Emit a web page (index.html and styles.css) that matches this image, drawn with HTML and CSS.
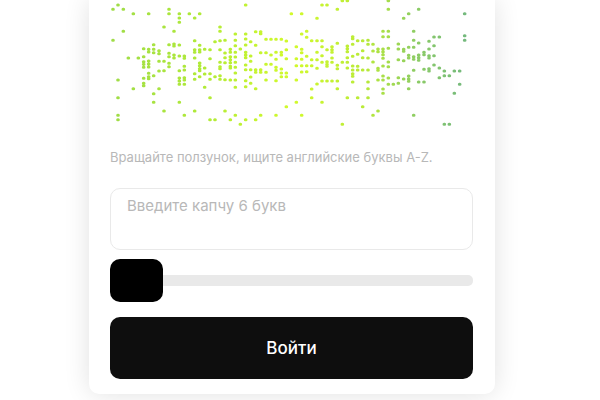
FILE: index.html
```
<!DOCTYPE html>
<html lang="ru">
<head>
  <meta charset="UTF-8">
  <meta name="viewport" content="width=device-width, initial-scale=1">
  <title>Вход</title>
  <link rel="stylesheet" href="styles.css">
</head>
<body>

<main class="page">
  <form class="card" id="captchaForm">
    <svg class="captcha" viewBox="330 0 1089 390" role="img" aria-label="Капча">
      <defs>
        <linearGradient id="dotColor" gradientUnits="userSpaceOnUse" x1="330" y1="0" x2="1419" y2="0">
          <stop offset="0" stop-color="#9fdc48"/>
          <stop offset="0.25" stop-color="#b0ea38"/>
          <stop offset="0.5" stop-color="#d2fa2c"/>
          <stop offset="0.7" stop-color="#b9ea38"/>
          <stop offset="0.85" stop-color="#8bcb66"/>
          <stop offset="1" stop-color="#70b680"/>
        </linearGradient>
      </defs>
      <path id="dots" class="dots" stroke="url(#dotColor)"/>
    </svg>

    <label class="hint" for="code">Вращайте ползунок, ищите английские буквы A-Z.</label>
    <textarea class="code" id="code" name="code" maxlength="6" placeholder="Введите капчу 6 букв"></textarea>
    <input class="slider" type="range" name="angle" min="0" max="360" value="0" aria-label="Поворот">
    <button class="submit" type="submit">Войти</button>
  </form>
</main>

<script src="script.js"></script>
</body>
</html>
```
FILE: styles.css
```
* {
  box-sizing: border-box;
}
body {
  margin: 0;
  background: #fff;
  font-family: Inter, "Liberation Sans", sans-serif;
}
.page {
  padding: 0 16px 6px 0;
}
.card {
  display: flex;
  flex-direction: column;
  max-width: 406px;
  margin: 0 auto;
  padding: 0 22px 15px 21px;
  background: #fff;
  border-radius: 0 0 10px 10px;
  box-shadow: 0 0 26px rgba(0, 0, 0, 0.12);
}
.captcha {
  display: block;
  width: 100%;
}
.dots {
  fill: none;
  stroke-width: 9;
  stroke-linecap: round;
}
.hint {
  margin-top: 17px;
  font-size: 13px;
  line-height: 20px;
  color: #b8b8b8;
}
.code {
  height: 62px;
  margin-top: 21px;
  padding: 7px 16px;
  border: 1px solid #e9e9e9;
  border-radius: 10px;
  background: #fff;
  font-family: inherit;
  font-size: 15px;
  line-height: 20px;
  color: #0e0e0e;
  resize: none;
  outline: none;
}
.code::placeholder {
  color: #b8b8b8;
}

/* ползунок */
.slider {
  -webkit-appearance: none;
  appearance: none;
  width: 100%;
  height: 11px;
  margin: 25px 0 0;
  border-radius: 5px;
  background: #e9e9e9;
}
.slider::-webkit-slider-thumb {
  -webkit-appearance: none;
  width: 53px;
  height: 43px;
  border-radius: 10px;
  background: #000;
  cursor: pointer;
}
.slider::-moz-range-thumb {
  width: 53px;
  height: 43px;
  border: none;
  border-radius: 10px;
  background: #000;
  cursor: pointer;
}

.submit {
  height: 62px;
  margin-top: 31px;
  border: none;
  border-radius: 10px;
  background: #0e0e0e;
  color: #fff;
  font-family: inherit;
  font-size: 17px;
  font-weight: 500;
  cursor: pointer;
}
```
FILE: script.js
```
// точки капчи: колонка -> координаты по вертикали
const columns = [
  [28, 121],
  [15, 240, 293, 346, 359],
  [28, 94],
  [174],
  [41, 266],
  [174],
  [146, 170, 185, 193, 202, 235, 250, 257],
  [41, 148, 156, 183, 192, 201, 220, 230, 236],
  [134, 148, 158, 227, 281, 307],
  [152, 161, 184, 213, 266],
  [81, 184, 212, 333],
  [28, 41, 134, 160, 170, 190, 200],
  [94, 132, 138, 165, 174],
  [41, 54, 67, 135, 168, 212, 234, 243, 253, 307],
  [168, 175, 199, 210, 233, 240, 253, 346],
  [41],
  [54, 122, 149, 157, 174, 221, 238, 333],
  [41, 136, 149, 156, 189, 197, 206, 212, 230],
  [148, 204, 222, 262],
  [149, 176, 221, 238, 293, 359],
  [125, 230, 359],
  [81, 94, 122, 149, 187, 200, 206, 227, 238],
  [121, 159, 173, 188, 239, 333],
  [148, 157, 170, 179, 188, 199, 204, 240, 359],
  [102, 121, 137, 157, 171, 187, 202, 219, 240, 262, 346],
  [147, 373],
  [15, 102, 117, 135, 157, 165, 173, 195, 209, 242, 260, 359],
  [125, 168, 184, 209, 231, 250],
  [95, 136, 209, 217, 266, 359],
  [95, 101, 158, 209, 217, 346],
  [118, 158, 193, 217, 240],
  [118, 165, 193],
  [118, 157, 178, 202, 211, 242, 346],
  [118, 157, 165, 207, 219, 230],
  [123, 149, 176, 219, 230, 320],
  [41],
  [140, 176, 197, 240, 307],
  [41, 102, 148, 158, 178, 197, 216, 346],
  [94, 112, 169, 197, 215],
  [122, 179, 197, 267, 293],
  [55, 122, 157, 179, 205, 252],
  [15, 122, 140, 167, 187, 243, 307],
  [15, 149, 185, 193, 199, 243],
  [140, 149, 157, 174, 187, 243],
  [28, 130, 196, 206, 243, 266],
  [2, 187, 373],
  [2, 138, 146, 155, 173, 187, 204, 293],
  [110, 116, 133, 169, 198, 210, 221, 229, 246],
  [122, 163, 199, 210, 293],
  [122, 152, 173, 210, 320],
  [121, 133, 174, 210, 246, 266, 293],
  [133, 153, 186, 346],
  [147, 155, 205, 211, 240, 333],
  [94, 110, 147, 155, 164, 175, 198, 228, 240, 267, 280],
  [2, 28, 94, 110, 145, 186, 200, 234, 253],
  [253],
  [132, 147, 179, 233, 250],
  [55, 148, 154, 182, 237],
  [41, 142, 166, 174, 228, 237, 244, 266],
  [94, 121, 142, 170, 178, 211, 346],
  [28, 129, 165, 173, 181, 246],
  [157, 164, 208, 246],
  [124, 147, 167, 174, 206, 213],
  [111, 137, 167, 195],
  [111, 204, 233],
  [213, 227, 373],
  [227, 373],
  [213, 280],
  [213, 253],
  [41, 107, 121]
];

let d = "";
columns.forEach((ys, i) => {
  const x = Math.round(338 + i * 15.29);
  ys.forEach(y => d += `M${x} ${y}h2`);
});
document.getElementById("dots").setAttribute("d", d);
```
